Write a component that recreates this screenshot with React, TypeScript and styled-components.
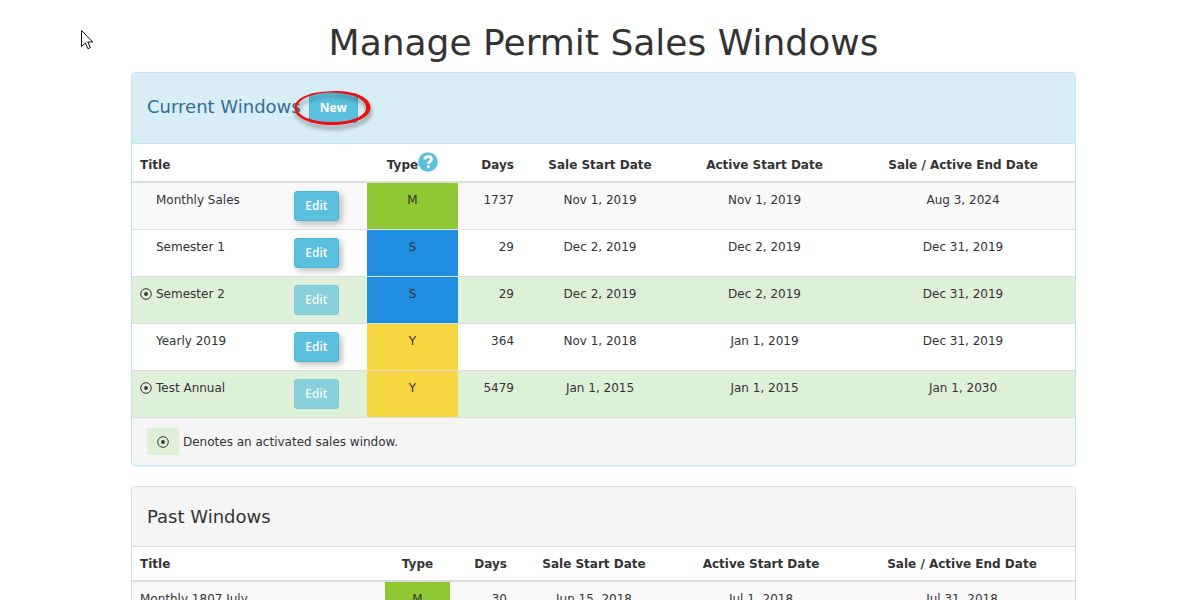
import React from "react";
import styled, { createGlobalStyle, css } from "styled-components";

const GlobalStyle = createGlobalStyle`
  *, *::before, *::after { box-sizing: border-box; }
  body {
    margin: 0;
    background: #fff;
    color: #333;
    font: 12px/18px "DejaVu Sans", Verdana, sans-serif;
  }
`;

type Kind = "M" | "S" | "Y";

const kindColors: Record<Kind, string> = {
  M: "#8fc832",
  S: "#1f8de0",
  Y: "#f6d741",
};

const Page = styled.main`
  position: relative;
  padding: 21px 124px 20px 131px;
`;

const PageTitle = styled.h1`
  margin: 0 0 7px;
  font-size: 36px;
  line-height: 44px;
  font-weight: 400;
  text-align: center;
`;

const Panel = styled.section<{ $info?: boolean }>`
  margin-bottom: 20px;
  border: 1px solid ${(p) => (p.$info ? "#bce8f1" : "#ddd")};
  border-radius: 4px;
  background: #fff;
  box-shadow: 0 1px 1px rgba(0, 0, 0, 0.05);
`;

const PanelHeading = styled.header<{ $info?: boolean }>`
  display: flex;
  align-items: flex-start;
  gap: 8px;
  padding: ${(p) => (p.$info ? "20px 15px" : "16px 15px")};
  border-bottom: 1px solid ${(p) => (p.$info ? "#bce8f1" : "#ddd")};
  border-radius: 3px 3px 0 0;
  background: ${(p) => (p.$info ? "#d9edf7" : "#f5f5f5")};
  color: ${(p) => (p.$info ? "#31708f" : "#333")};
`;

const PanelTitle = styled.h2`
  margin: 0;
  font-size: 18px;
  line-height: 27px;
  font-weight: 400;
`;

const PanelFooter = styled.footer`
  display: flex;
  align-items: center;
  gap: 4px;
  padding: 10px 15px;
  border-top: 1px solid #ddd;
  border-radius: 0 0 3px 3px;
  background: #f5f5f5;
`;

const LegendSwatch = styled.span`
  display: flex;
  align-items: center;
  justify-content: center;
  width: 32px;
  height: 27px;
  background: #dff0d8;
`;

const Button = styled.button<{ $strong?: boolean }>`
  display: block;
  min-width: 45px;
  height: 30px;
  padding: 0 10px;
  border: 1px solid #46b8da;
  border-radius: 3px;
  background: #5bc0de;
  color: #fff;
  font: ${(p) => (p.$strong ? 700 : 600)} 12px/18px "Open Sans", sans-serif;
  cursor: pointer;
  box-shadow: ${(p) => (p.$strong ? "none" : "3px 3px 6px rgba(0, 0, 0, 0.25)")};

  &:disabled {
    opacity: 0.65;
    box-shadow: none;
    cursor: not-allowed;
  }
`;

const Highlighted = styled.span`
  position: relative;
`;

const HighlightRing = styled.svg`
  position: absolute;
  left: -19px;
  top: -7px;
  pointer-events: none;
  overflow: visible;
  filter: drop-shadow(1px 4px 2px rgba(0, 0, 0, 0.4));
`;

const Pointer = styled.svg`
  position: absolute;
  left: 80px;
  top: 29px;
  pointer-events: none;
`;

const Table = styled.table`
  width: 100%;
  table-layout: fixed;
  border-collapse: separate;
  border-spacing: 0;
`;

const Column = styled.col<{ $width: number }>`
  width: ${(p) => p.$width}px;
`;

type Align = "left" | "center" | "right";

const HeadCell = styled.th<{ $align?: Align; $tall?: boolean }>`
  height: ${(p) => (p.$tall ? 39 : 35)}px;
  padding: ${(p) => (p.$tall ? "4px 8px 0" : "0 8px")};
  border-bottom: 2px solid #ddd;
  font-weight: 700;
  white-space: nowrap;
  text-align: ${(p) => p.$align ?? "center"};
  vertical-align: middle;
`;

const HeadLabel = styled.span`
  display: inline-flex;
  align-items: center;
`;

const HelpButton = styled.button`
  display: flex;
  margin: -6px 0 0;
  padding: 0;
  border: 0;
  background: none;
  cursor: help;
`;

const Row = styled.tr<{ $activated?: boolean }>`
  background: #fff;

  &:first-child {
    background: #f9f9f9;
  }

  ${(p) =>
    p.$activated &&
    css`
      background: #dff0d8;
    `}
`;

const Cell = styled.td<{ $align?: Align; $kind?: Kind }>`
  height: 47px;
  padding: 8px 8px 7px;
  border-top: 1px solid #ddd;
  text-align: ${(p) => p.$align ?? "center"};
  vertical-align: top;
  background: ${(p) => (p.$kind ? kindColors[p.$kind] : "transparent")};

  tr:first-child > & {
    height: 46px;
    border-top: 0;
  }
`;

const WindowName = styled.span`
  display: grid;
  grid-template-columns: 12px 1fr;
  align-items: center;
  gap: 4px;
`;

const MarkSlot = styled.span`
  display: flex;
`;

const ActiveMark = () => (
  <svg width="12" height="12" viewBox="0 0 12 12" role="img" aria-label="Activated">
    <circle cx="6" cy="6" r="5.3" fill="none" stroke="#333" strokeWidth="1" />
    <circle cx="6" cy="6" r="1.9" fill="#333" />
  </svg>
);

const HelpIcon = () => (
  <svg width="20" height="20" viewBox="0 0 20 20" aria-hidden="true">
    <circle cx="10" cy="10" r="9.8" fill="#5bc0de" />
    <path
      d="M6.4 7.4C6.9 5.4 8.3 4.6 10.1 4.6c2 0 3.4 1.1 3.4 2.8 0 2.3-3.1 2.2-3.1 4.5"
      fill="none"
      stroke="#fff"
      strokeWidth="2.7"
    />
    <rect x="9" y="13.2" width="2.8" height="2.8" rx="0.3" fill="#fff" />
  </svg>
);

interface SalesWindow {
  title: string;
  kind: Kind;
  days: number;
  saleStart: string;
  activeStart: string;
  end: string;
  activated?: boolean;
}

const currentWindows: SalesWindow[] = [
  { title: "Monthly Sales", kind: "M", days: 1737, saleStart: "Nov 1, 2019", activeStart: "Nov 1, 2019", end: "Aug 3, 2024" },
  { title: "Semester 1", kind: "S", days: 29, saleStart: "Dec 2, 2019", activeStart: "Dec 2, 2019", end: "Dec 31, 2019" },
  { title: "Semester 2", kind: "S", days: 29, saleStart: "Dec 2, 2019", activeStart: "Dec 2, 2019", end: "Dec 31, 2019", activated: true },
  { title: "Yearly 2019", kind: "Y", days: 364, saleStart: "Nov 1, 2018", activeStart: "Jan 1, 2019", end: "Dec 31, 2019" },
  { title: "Test Annual", kind: "Y", days: 5479, saleStart: "Jan 1, 2015", activeStart: "Jan 1, 2015", end: "Jan 1, 2030", activated: true },
];

const pastWindows: SalesWindow[] = [
  { title: "Monthly 1807 July", kind: "M", days: 30, saleStart: "Jun 15, 2018", activeStart: "Jul 1, 2018", end: "Jul 31, 2018" },
];

const currentColumns = [154, 81, 91, 64, 156, 173, 224];
const pastColumns = [253, 65, 65, 158, 176, 226];

const DateCells = ({ item }: { item: SalesWindow }) => (
  <>
    <Cell $kind={item.kind}>{item.kind}</Cell>
    <Cell $align="right">{item.days}</Cell>
    <Cell>{item.saleStart}</Cell>
    <Cell>{item.activeStart}</Cell>
    <Cell>{item.end}</Cell>
  </>
);

const DateHeads = ({ tall }: { tall?: boolean }) => (
  <>
    <HeadCell $tall={tall} $align="right">Days</HeadCell>
    <HeadCell $tall={tall}>Sale Start Date</HeadCell>
    <HeadCell $tall={tall}>Active Start Date</HeadCell>
    <HeadCell $tall={tall}>Sale / Active End Date</HeadCell>
  </>
);

const Columns = ({ widths }: { widths: number[] }) => (
  <colgroup>
    {widths.map((w, i) => (
      <Column key={i} $width={w} />
    ))}
  </colgroup>
);

export default function App() {
  return (
    <>
      <GlobalStyle />
      <Page>
        <PageTitle>Manage Permit Sales Windows</PageTitle>

        <Panel $info>
          <PanelHeading $info>
            <PanelTitle>Current Windows</PanelTitle>
            <Highlighted>
              <Button type="button" $strong>New</Button>
              <HighlightRing width="86" height="44" viewBox="290 86 86 44" aria-hidden="true">
                <path
                  fill="#f00e0e"
                  fillRule="evenodd"
                  d="M326 91.5C308 92.5 294.5 99 294.5 108C294.5 118 311 125 332 125C354 125 370.5 117.5 370.5 107.5C370.5 97 354 91 335 91L326 91.5ZM326 92.7C309 94.3 297.2 100 297.2 108C297.2 116.5 313 122 332 122C351 122 366.2 116.5 366.2 107.5C366.2 99 352 93.5 335 92.8Z"
                />
              </HighlightRing>
            </Highlighted>
          </PanelHeading>
          <Table>
            <Columns widths={currentColumns} />
            <thead>
              <tr>
                <HeadCell $tall $align="left" colSpan={2}>Title</HeadCell>
                <HeadCell $tall>
                  <HeadLabel>
                    Type
                    <HelpButton type="button" aria-label="About types">
                      <HelpIcon />
                    </HelpButton>
                  </HeadLabel>
                </HeadCell>
                <DateHeads tall />
              </tr>
            </thead>
            <tbody>
              {currentWindows.map((item) => (
                <Row key={item.title} $activated={item.activated}>
                  <Cell $align="left">
                    <WindowName>
                      <MarkSlot>{item.activated && <ActiveMark />}</MarkSlot>
                      <span>{item.title}</span>
                    </WindowName>
                  </Cell>
                  <Cell $align="left">
                    <Button type="button" disabled={item.activated}>Edit</Button>
                  </Cell>
                  <DateCells item={item} />
                </Row>
              ))}
            </tbody>
          </Table>
          <PanelFooter>
            <LegendSwatch>
              <ActiveMark />
            </LegendSwatch>
            <span>Denotes an activated sales window.</span>
          </PanelFooter>
        </Panel>

        <Panel>
          <PanelHeading>
            <PanelTitle>Past Windows</PanelTitle>
          </PanelHeading>
          <Table>
            <Columns widths={pastColumns} />
            <thead>
              <tr>
                <HeadCell $align="left">Title</HeadCell>
                <HeadCell>Type</HeadCell>
                <DateHeads />
              </tr>
            </thead>
            <tbody>
              {pastWindows.map((item) => (
                <Row key={item.title}>
                  <Cell $align="left">{item.title}</Cell>
                  <DateCells item={item} />
                </Row>
              ))}
            </tbody>
          </Table>
        </Panel>

        <Pointer width="14" height="22" viewBox="0 0 14 22" aria-hidden="true">
          <path
            d="M1.5 1.5V17.5L5.3 14L7.9 19.7L10.3 18.6L7.8 13H12.7Z"
            fill="#fff"
            stroke="#111"
            strokeWidth="1"
          />
        </Pointer>
      </Page>
    </>
  );
}
